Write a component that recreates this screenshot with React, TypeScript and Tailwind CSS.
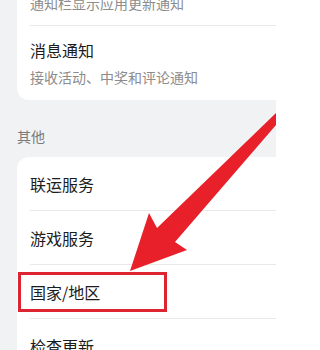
import React from "react";

const font = { fontFamily: '"Noto Sans CJK SC", "Noto Sans", sans-serif' };

function Row({ title, sub, last }: { title: string; sub?: string; last?: boolean }) {
    return (
        <div className="pl-[13px]">
            <div className={`flex flex-col justify-center ${sub ? "h-[74px]" : "h-[54px]"} ${last ? "" : "border-b border-[#e9e9eb]"}`}>
                <div className="text-[16px] leading-[22px] text-[#1c1c1c]">{title}</div>
                {sub && <div className="mt-[6px] text-[14px] leading-[20px] text-[#8c8c8c]">{sub}</div>}
            </div>
        </div>
    );
}

export default function App() {
    return (
        <div className="relative w-[276px] h-[350px] overflow-hidden bg-[#f1f2f4]" style={font}>
            <div className="pl-[17px]">
                <div className="-mt-[48px] w-[300px] rounded-[12px] bg-white">
                    <Row title="应用更新提醒" sub="通知栏显示应用更新通知" />
                    <Row title="消息通知" sub="接收活动、中奖和评论通知" last />
                </div>
                <div className="pt-[26px] pb-[11px] text-[14px] leading-[20px] text-[#7a7a7a]">其他</div>
                <div className="w-[300px] rounded-[12px] bg-white">
                    <Row title="联运服务" />
                    <Row title="游戏服务" />
                    <Row title="国家/地区" />
                    <Row title="检查更新" last />
                </div>
            </div>

            {/* annotation overlay */}
            <div className="absolute left-[18px] top-[272px] w-[149px] h-[40px] border-[3px] border-[#dc2530]" />
            <svg className="absolute left-0 top-0" width="276" height="350" viewBox="0 0 276 350">
                <polygon
                    points="276,113 276,125 175,242 187,250 130,271 149,213 157,228"
                    fill="#e8202a"
                />
            </svg>
        </div>
    );
}
